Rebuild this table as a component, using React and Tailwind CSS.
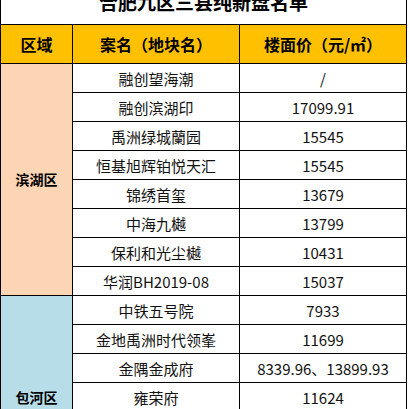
const binhu = [
  ['融创望海潮', '/'],
  ['融创滨湖印', '17099.91'],
  ['禹洲绿城蘭园', '15545'],
  ['恒基旭辉铂悦天汇', '15545'],
  ['锦绣首玺', '13679'],
  ['中海九樾', '13799'],
  ['保利和光尘樾', '10431'],
  ['华润BH2019-08', '15037'],
];

// last rows of 包河区 lie below the visible area
const baohe = [
  ['中铁五号院', '7933'],
  ['金地禹洲时代领峯', '11699'],
  ['金隅金成府', '8339.96、13899.93'],
  ['雍荣府', '11624'],
  ['', ''],
  ['', ''],
  ['', ''],
];

const font = { fontFamily: '"Noto Sans CJK SC", "Microsoft YaHei", sans-serif' };

const cell = 'flex items-center justify-center border-r border-b border-black text-[15px] text-[#111] pt-[2px] whitespace-nowrap';
const headCell = 'bg-[#FFC000] border-r border-b border-black flex items-center justify-center text-[16px] font-bold text-black';

function District({ name, bg, items }) {
  return (
    <>
      <div
        className={`${bg} border-r border-b border-black flex items-center justify-center text-[14px] font-bold text-black`}
        style={{ gridRow: `span ${items.length}` }}
      >
        {name}
      </div>
      {items.map(([title, price], i) => (
        <div key={i} className="contents">
          <div className={`col-start-2 ${cell}`}>{title}</div>
          <div className={cell}>{price}</div>
        </div>
      ))}
    </>
  );
}

export default function App() {
  return (
    <div className="w-[409px] h-[409px] overflow-hidden bg-white" style={font}>
      <div
        className="w-[407px] border-l border-black grid grid-cols-[72px_167px_167px]"
        style={{ gridTemplateRows: `25px 39px repeat(${binhu.length + baohe.length}, 29px)` }}
      >
        {/* title, top half cut off */}
        <div className="col-span-3 border-r border-b border-black overflow-hidden flex justify-center">
          <span className="text-[19px] leading-[20px] font-bold text-black -mt-[8px]">
            合肥九区三县纯新盘名单
          </span>
        </div>

        <div className={headCell}>区域</div>
        <div className={headCell}>案名（地块名）</div>
        <div className={headCell}>楼面价（元/㎡）</div>

        <District name="滨湖区" bg="bg-[#FCD5B4]" items={binhu} />
        <District name="包河区" bg="bg-[#B7DEE8]" items={baohe} />
      </div>
    </div>
  );
}
